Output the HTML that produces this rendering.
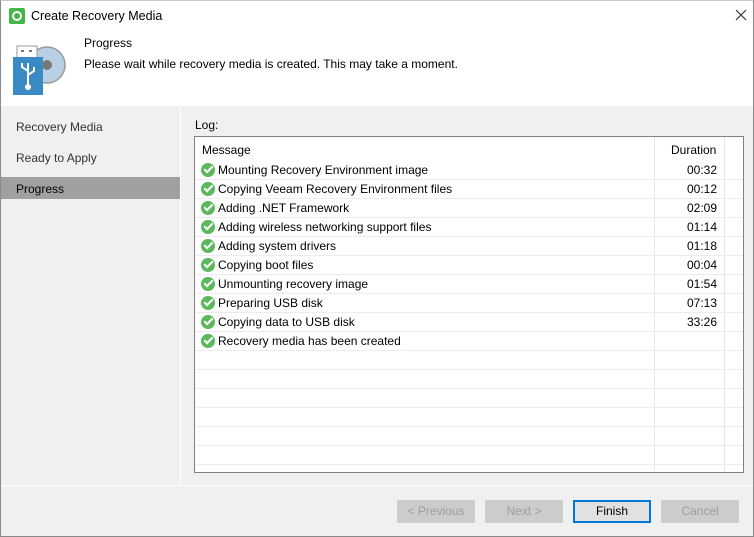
<!DOCTYPE html><html><head><style>
body{margin:0;width:754px;height:537px;overflow:hidden;font-family:"Liberation Sans",sans-serif;font-size:12px;color:#000}
.win{position:absolute;left:0;top:0;width:752px;height:535px;border:1px solid #8a8a8a;border-top:1px solid #c8c8c8;background:#f0f0f0}
.abs{position:absolute}
.row{position:absolute;left:0;width:548px;height:19px;border-bottom:1px solid #ececec}
.row .t{position:absolute;left:23px;top:3px}
.row .d{position:absolute;left:460px;width:62px;text-align:right;top:3px}
.ck{position:absolute;left:6px;top:3px;width:14px;height:14px;border-radius:50%;background:#5cb85c}
.ck:after{content:"";position:absolute;left:3px;top:3px;width:7px;height:3px;border-left:2px solid #fff;border-bottom:2px solid #fff;transform:rotate(-45deg)}
.btn{position:absolute;top:499px;width:76px;height:21px;border:1px solid #ccc;background:#ccc;color:#9d9d9d;text-align:center;line-height:21px}
</style></head><body><div class="win">
<div class="abs" style="left:0;top:0;width:752px;height:105px;background:#fff"></div>
<div class="abs" style="left:8px;top:7px;width:16px;height:16px;background:#45b649;border-radius:2px"><div style="position:absolute;left:3px;top:3px;width:6px;height:6px;border:2px solid #fff;border-radius:50%"></div></div>
<div class="abs" style="left:30px;top:8px;font-size:12.5px">Create Recovery Media</div>
<svg class="abs" style="left:734px;top:8px" width="12" height="12"><path d="M1 1L11 11M11 1L1 11" stroke="#333" stroke-width="1.2"/></svg>
<svg class="abs" style="left:10px;top:40px" width="58" height="56"><circle cx="36" cy="24" r="18" fill="#b8cfe4" stroke="#999" stroke-width="1.5"/><circle cx="36" cy="24" r="5" fill="#777"/><rect x="6" y="5" width="20" height="12" fill="#fff" stroke="#999"/><rect x="10" y="9" width="3" height="2" fill="#777"/><rect x="18" y="9" width="3" height="2" fill="#777"/><rect x="2" y="16" width="30" height="38" fill="#3a8ac4"/><path d="M17 22v24M17 30l-6-4v-4M17 34l6-4v-4" stroke="#fff" stroke-width="2" fill="none"/><circle cx="17" cy="46" r="3" fill="#fff"/></svg>
<div class="abs" style="left:83px;top:35px">Progress</div>
<div class="abs" style="left:83px;top:56px">Please wait while recovery media is created. This may take a moment.</div>
<div class="abs" style="left:179px;top:105px;width:1px;height:379px;background:#fff"></div>
<div class="abs" style="left:15px;top:119px;color:#333">Recovery Media</div>
<div class="abs" style="left:15px;top:150px;color:#333">Ready to Apply</div>
<div class="abs" style="left:0;top:176px;width:179px;height:22px;background:#a0a0a0"></div>
<div class="abs" style="left:15px;top:181px">Progress</div>
<div class="abs" style="left:194px;top:117px">Log:</div>
<div class="abs" style="left:193px;top:135px;width:548px;height:335px;border:1px solid #828282;background:#fff;overflow:hidden">
<div class="abs" style="left:459px;top:0;width:1px;height:335px;background:#e5e5e5"></div>
<div class="abs" style="left:529px;top:0;width:1px;height:335px;background:#e5e5e5"></div>
<div class="abs" style="left:7px;top:6px">Message</div>
<div class="abs" style="left:476px;top:6px">Duration</div>
<div style="position:absolute;top:0;left:0;width:548px">
<div class="row" style="top:23px"><div class="ck"></div><div class="t">Mounting Recovery Environment image</div><div class="d">00:32</div></div>
<div class="row" style="top:42px"><div class="ck"></div><div class="t">Copying Veeam Recovery Environment files</div><div class="d">00:12</div></div>
<div class="row" style="top:61px"><div class="ck"></div><div class="t">Adding .NET Framework</div><div class="d">02:09</div></div>
<div class="row" style="top:80px"><div class="ck"></div><div class="t">Adding wireless networking support files</div><div class="d">01:14</div></div>
<div class="row" style="top:99px"><div class="ck"></div><div class="t">Adding system drivers</div><div class="d">01:18</div></div>
<div class="row" style="top:118px"><div class="ck"></div><div class="t">Copying boot files</div><div class="d">00:04</div></div>
<div class="row" style="top:137px"><div class="ck"></div><div class="t">Unmounting recovery image</div><div class="d">01:54</div></div>
<div class="row" style="top:156px"><div class="ck"></div><div class="t">Preparing USB disk</div><div class="d">07:13</div></div>
<div class="row" style="top:175px"><div class="ck"></div><div class="t">Copying data to USB disk</div><div class="d">33:26</div></div>
<div class="row" style="top:194px"><div class="ck"></div><div class="t">Recovery media has been created</div></div>
<div class="row" style="top:213px"></div><div class="row" style="top:232px"></div><div class="row" style="top:251px"></div><div class="row" style="top:270px"></div><div class="row" style="top:289px"></div><div class="row" style="top:308px"></div>
</div></div>
<div class="abs" style="left:0;top:484px;width:752px;height:1px;background:#fff"></div>
<div class="btn" style="left:396px">&lt; Previous</div>
<div class="btn" style="left:484px">Next &gt;</div>
<div class="btn" style="left:572px;border:2px solid #0078d7;width:74px;height:19px;line-height:19px;background:#e1e1e1;color:#000">Finish</div>
<div class="btn" style="left:660px">Cancel</div>
</div></body></html>
